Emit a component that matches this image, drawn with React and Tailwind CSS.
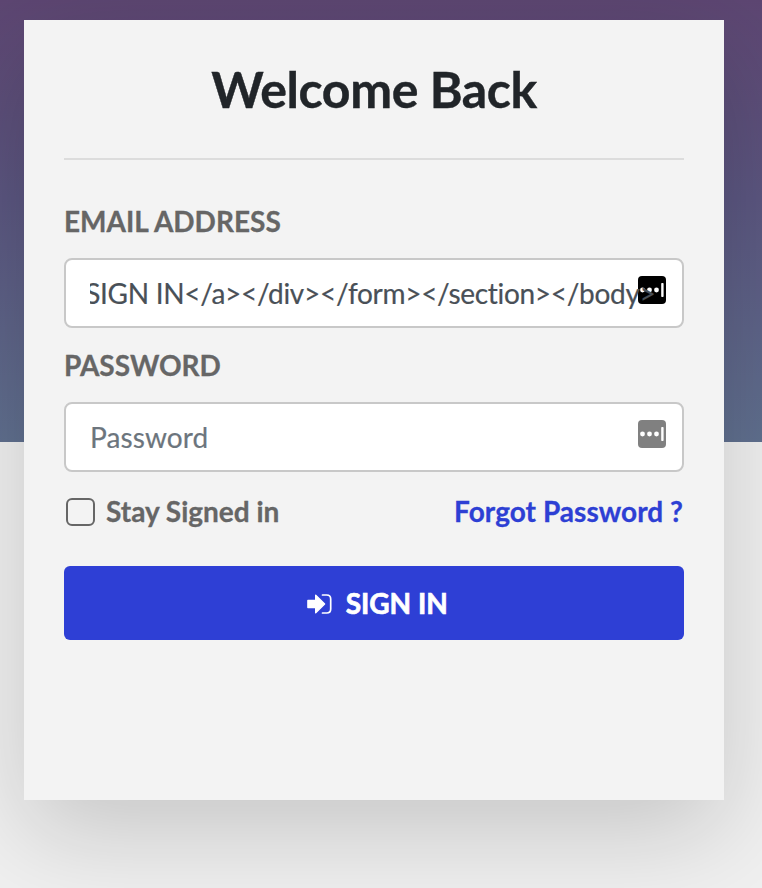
import React from "react";

function DotsIcon({ bg }) {
  return (
    <svg className="absolute top-4 right-4 size-7" viewBox="0 0 28 28">
      <rect width="28" height="28" rx="4" fill={bg} />
      <circle cx="4.5" cy="14" r="2.4" fill="#fff" />
      <circle cx="11.5" cy="14" r="2.4" fill="#fff" />
      <circle cx="18.5" cy="14" r="2.4" fill="#fff" />
      <rect x="23.2" y="7" width="2.4" height="14" rx="0.8" fill="#fff" />
    </svg>
  );
}

export default function App() {
  return (
    <div className="relative h-[888px] w-[762px] overflow-hidden bg-[#f0f0f0] px-6 pt-5 font-['Lato',sans-serif]">
      <div className="absolute inset-x-0 top-0 h-[442px] bg-linear-to-b from-[#5d4672] via-[#5b5680] via-45% to-[#60708f]" />
      <main className="relative h-[780px] w-[700px] bg-[#f3f3f3] px-10 shadow-[0_32px_96px_rgba(0,0,0,0.175)]">
        <h1 className="flex h-[140px] items-center justify-center border-b-2 border-[#dcdcdc] pt-px text-[50px] font-bold tracking-[-0.4px] text-[#212529] [-webkit-text-stroke:0.4px_#212529]">
          Welcome Back
        </h1>
        <label className="mt-[44px] block h-[34px] text-[28px] leading-[34px] font-bold text-[#666] [-webkit-text-stroke:0.3px_#666]">EMAIL ADDRESS</label>
        <div className="relative mt-5 flex h-[70px] items-center rounded-lg border-2 border-[#c8c8c8] bg-white px-6">
          <DotsIcon bg="#000" />
          <div className="relative flex w-[568px] justify-end overflow-hidden pr-[2.5px] text-[28px] tracking-[-0.3px] whitespace-nowrap text-[#495057] [-webkit-text-stroke:0.2px_#495057]">
            {"SIGN IN</a></div></form></section></body>"}
          </div>
        </div>
        <label className="mt-5 block h-[34px] text-[28px] leading-[34px] font-bold text-[#666] [-webkit-text-stroke:0.3px_#666]">PASSWORD</label>
        <div className="relative mt-5 flex h-[70px] items-center rounded-lg border-2 border-[#c8c8c8] bg-white px-6 text-[28px] tracking-[0.1px] text-[#6c757d] [-webkit-text-stroke:0.2px_#6c757d]">
          Password
          <DotsIcon bg="#808080" />
        </div>
        <div className="mt-5 flex h-10 items-center text-[28px] font-bold text-[#666]">
          <span className="mr-[11.5px] ml-0.5 size-[28.5px] rounded-[6px] border-2 border-[#666]" />
          <span className="-mt-0.5 [-webkit-text-stroke:0.3px_#666]">Stay Signed in</span>
          <a className="-mt-0.5 mr-px ml-auto tracking-[0.04px] text-[#2d3fd4] [-webkit-text-stroke:0.3px_#2d3fd4]">Forgot Password ?</a>
        </div>
        <button className="mt-[34px] flex h-[74px] w-full items-center justify-center gap-[14px] rounded-md bg-[#2e3fd5] pl-[6.5px] text-[28px] font-bold text-white">
          <svg className="mt-0.5 h-5 w-[25px]" viewBox="0 0 25 20">
            <path
              fill="#fff"
              stroke="#fff"
              strokeWidth="1.4"
              strokeLinejoin="round"
              d="M.9 6.5h7.8V1.2L17.6 10l-8.9 8.8v-5.3H.9z"
            />
            <path fill="none" stroke="#fff" strokeWidth="1.7" strokeLinecap="round" d="M15.5 1h4.2q4 0 4 4v10q0 4-4 4h-4.2" />
          </svg>
          <span className="[-webkit-text-stroke:0.7px_white]">SIGN IN</span>
        </button>
      </main>
    </div>
  );
}
